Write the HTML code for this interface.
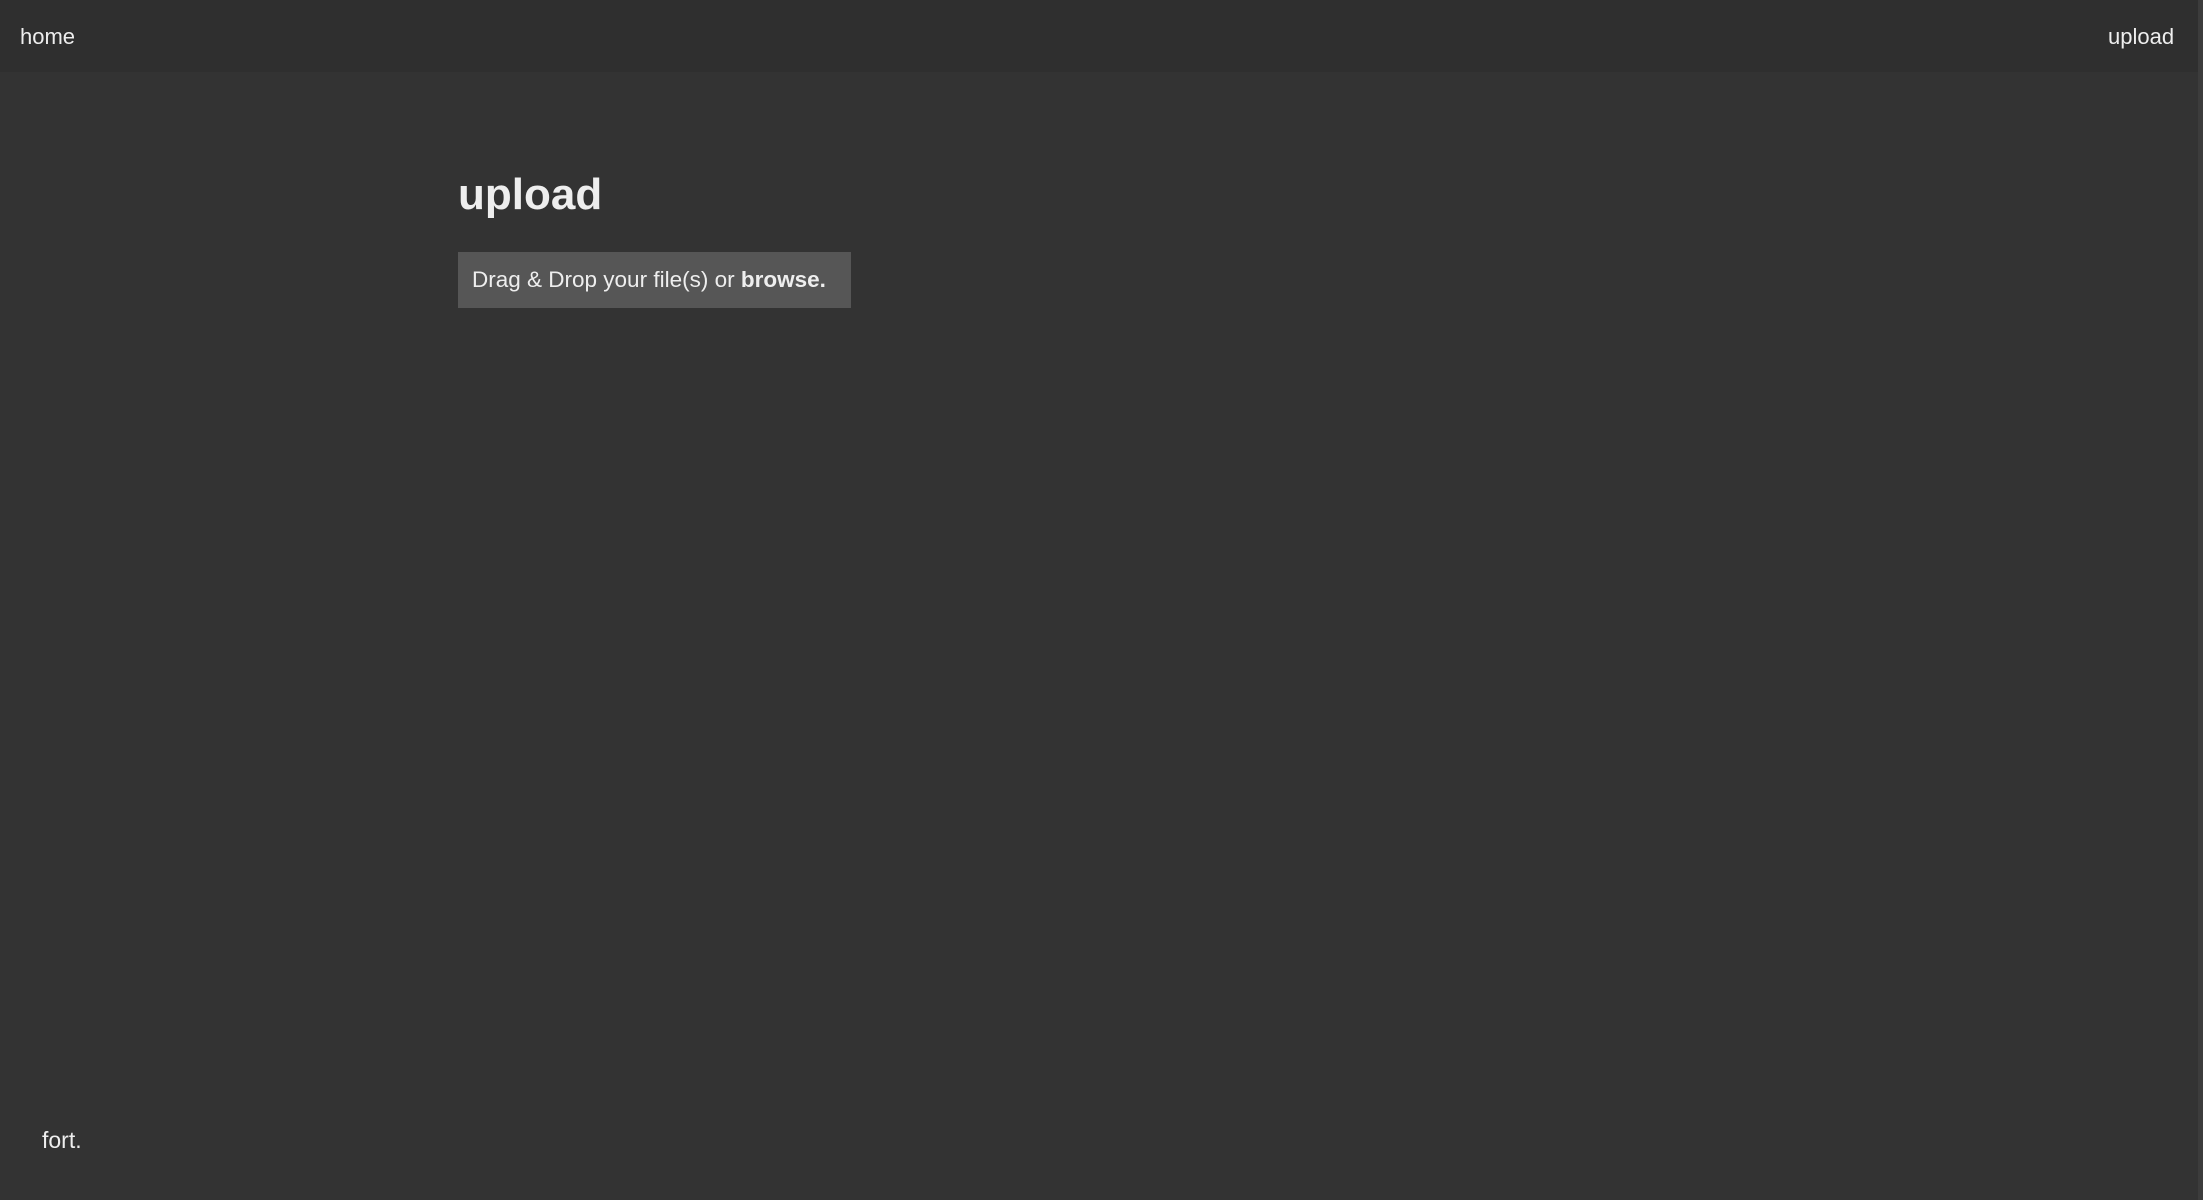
<!DOCTYPE html>
<html><head><style>
html,body{margin:0;padding:0;}
body{width:2203px;height:1200px;background:#333;font-family:"Liberation Sans",sans-serif;color:#eee;position:relative;overflow:hidden;}
.hdr{position:absolute;left:0;top:0;width:2198px;height:72px;background:#2f2f2f;}
.sb{position:absolute;right:0;top:0;width:5px;height:1200px;background:#3c3c3c;}
.t{position:absolute;white-space:nowrap;font-size:22px;line-height:1;}
h1{position:absolute;left:458px;top:173px;margin:0;font-size:44px;font-weight:bold;line-height:1;}
.box{position:absolute;left:458px;top:252px;width:393px;height:56px;background:#565656;}
.box span{position:absolute;left:14px;top:17px;font-size:22.5px;line-height:1;white-space:nowrap;}
</style></head><body>
<div class="hdr"></div>
<div class="sb"></div>
<div class="t" style="left:20px;top:26px;">home</div>
<div class="t" style="left:2108px;top:26px;">upload</div>
<h1>upload</h1>
<div class="box"><span>Drag &amp; Drop your file(s) or <b>browse.</b></span></div>
<div class="t" style="left:42px;top:1129px;font-size:23px;">fort.</div>
</body></html>
